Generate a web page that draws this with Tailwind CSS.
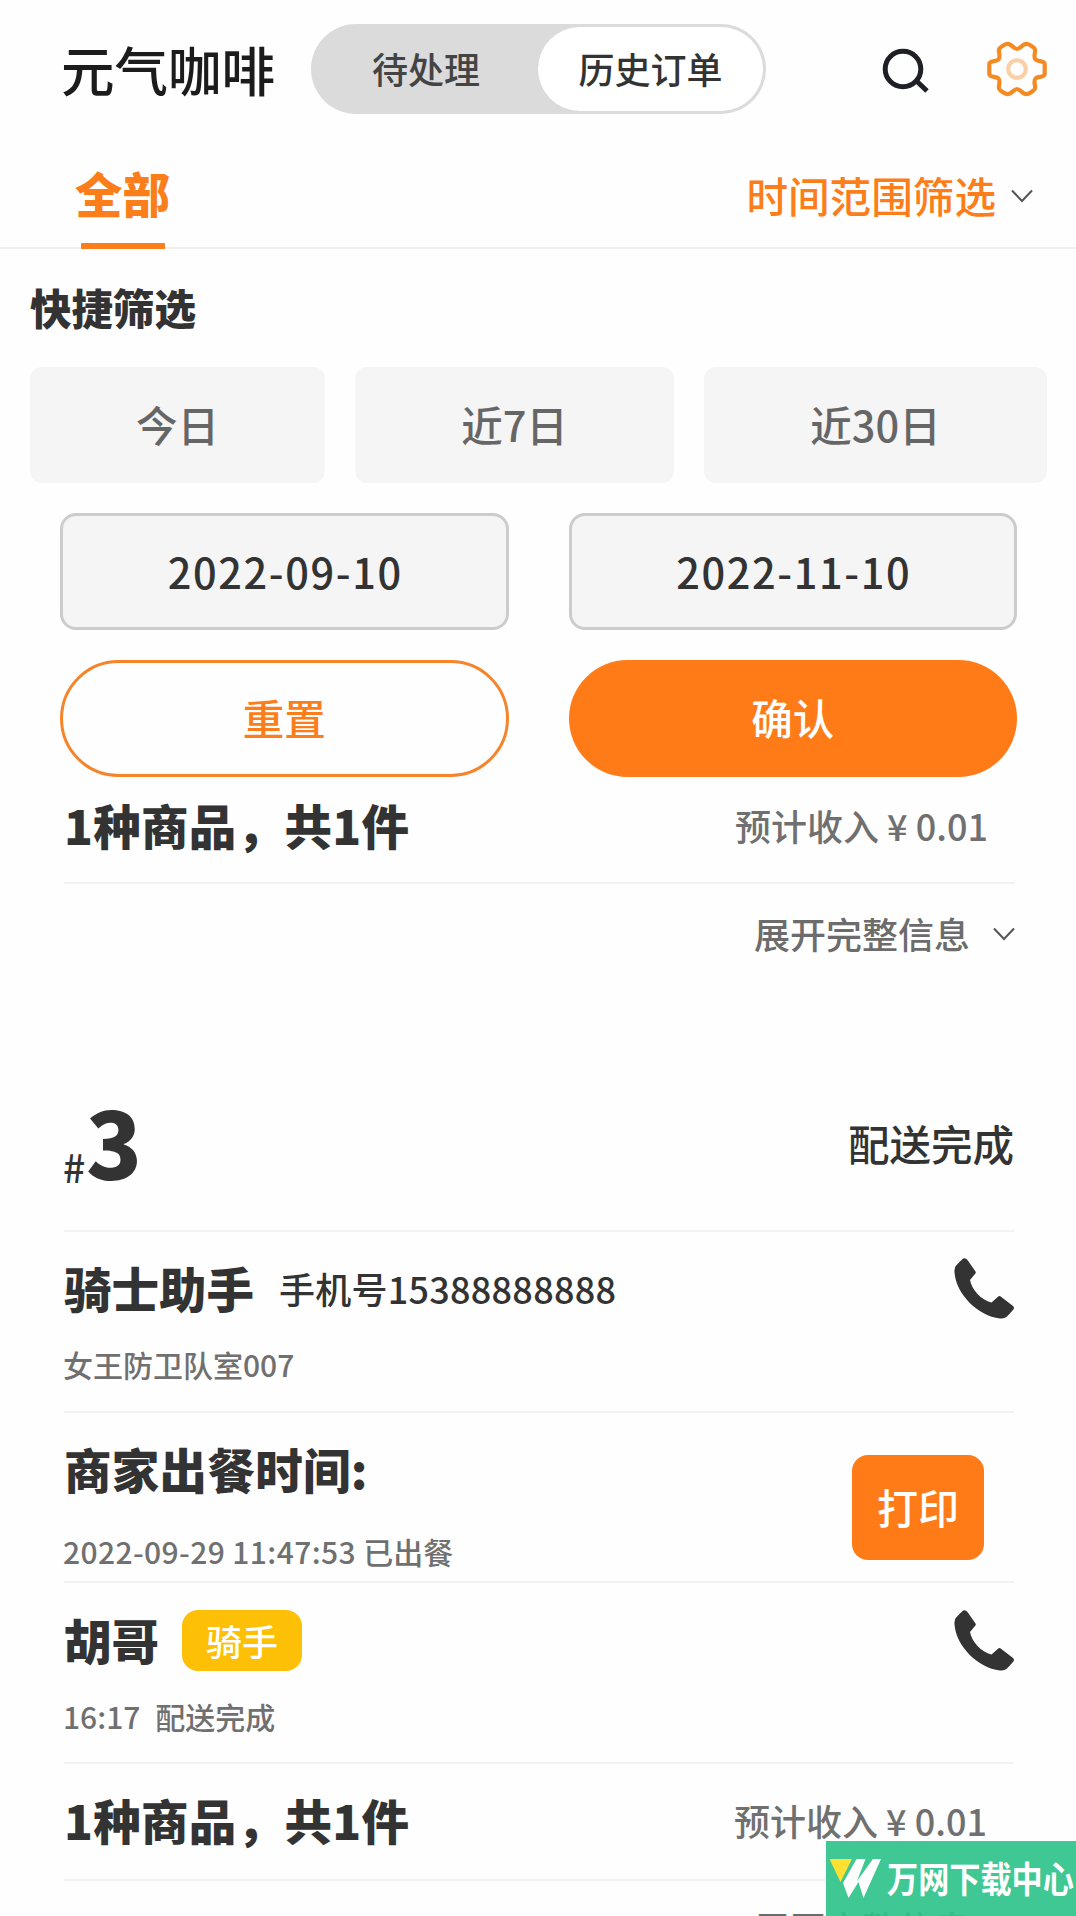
<!DOCTYPE html>
<html lang="zh-CN">
<head>
<meta charset="utf-8">
<title>元气咖啡</title>
<script src="https://cdn.jsdelivr.net/npm/@tailwindcss/browser@4"></script>
</head>
<body class="relative h-[1916px] w-[1076px] overflow-hidden bg-[#fefefe] font-['Noto_Sans_CJK_SC',sans-serif] leading-none text-[#333] whitespace-nowrap">

<svg class="hidden">
  <symbol id="phone" viewBox="0 0 60 61"><path fill="#333" d="M8 1.500Q11-1 13.500 2L21.500 13.500Q22.300 15 21 16L16 22C18 32 27 42 37.500 44.500L44 38.700Q45.500 37.500 47 38.700L59 48Q61 50 59 52L53 58.500Q50.500 61 46 60.500C24 58 2 36 .5 14.500Q0 9 2.500 7Z"/></symbol>
  <symbol id="chevron" viewBox="0 0 22 14"><path fill="none" stroke="#555" stroke-width="2" d="M1 1.500L11 12L21 1.500"/></symbol>
</svg>

<header class="flex h-[138px] pl-[61px] pr-[29px]">
  <h1 class="mt-[42px] w-[250px] text-[53.500px] font-medium text-[#1c1c1c]">元气咖啡</h1>
  <div class="mt-6 flex h-[90px] w-[455px] rounded-full bg-[#dbdbdb] p-[3px] text-[36px] font-medium">
    <div class="flex w-[224px] items-center justify-center pb-[3px] text-[#444]">待处理</div>
    <div class="flex w-[225px] items-center justify-center rounded-full bg-white pb-[3px]">历史订单</div>
  </div>
  <svg class="ml-[115px] mt-[46px] h-12 w-12" viewBox="0 0 48 48" fill="none" stroke="#1f2026" stroke-width="5"><circle cx="22" cy="23" r="17.800"/><path d="M34.500 34L46 45"/></svg>
  <svg class="ml-auto mt-[40px] h-[58px] w-[60px]" viewBox="-30 -29 60 58" fill="none">
    <path stroke="#f58a22" stroke-width="4.200" stroke-linejoin="round" d="M0-20C3-20 6-25.500 9.500-25.200C12-24.800 17.500-21.500 18-19.500C18.700-16 16-12.500 18.500-9.500C21-7 27.500-9 27.700-5V5C27.500 9 21 7 18.500 9.500C16 12.500 18.700 16 18 19.500C17.500 21.500 12 24.800 9.500 25.200C6 25.500 3 20 0 20C-3 20-6 25.500-9.500 25.200C-12 24.800-17.500 21.500-18 19.500C-18.700 16-16 12.500-18.500 9.500C-21 7-27.500 9-27.700 5V-5C-27.500-9-21-7-18.500-9.500C-16-12.500-18.700-16-18-19.500C-17.500-21.500-12-24.800-9.500-25.200C-6-25.500-3-20 0-20Z"/>
    <circle r="8.800" stroke="#fbcfa6" stroke-width="4"/>
  </svg>
</header>

<nav class="relative flex h-[111px] justify-between border-b-2 border-[#f0f0f0] pl-[75px] pr-[43px] text-[#fb7e1a]">
  <div class="pt-[31px] text-[47.500px] font-black">全部</div>
  <div class="flex pt-[37px] text-[41.600px] font-medium">时间范围筛选<svg class="ml-[15px] mt-[14px] h-[14px] w-[22px]"><use href="#chevron"/></svg></div>
  <div class="absolute bottom-[-2px] left-[81px] h-[6px] w-[84px] rounded-[1px] bg-[#fb7e1a]"></div>
</nav>

<section class="h-[529px] pl-[30px] pr-[29px] pt-[38px]">
  <h2 class="text-[41.500px] font-black">快捷筛选</h2>
  <div class="mt-[38px] flex gap-[30px] text-[41.500px] font-medium text-[#666]">
    <div class="flex h-[116px] w-[295px] items-center justify-center rounded-xl bg-[#f5f5f5]">今日</div>
    <div class="flex h-[116px] w-[319px] items-center justify-center rounded-xl bg-[#f5f5f5]">近7日</div>
    <div class="flex h-[116px] w-[343px] items-center justify-center rounded-xl bg-[#f5f5f5]">近30日</div>
  </div>
  <div class="mt-[30px] grid grid-cols-2 gap-x-[60px] gap-y-[30px] px-[30px] text-[41.500px] font-medium">
    <div class="flex h-[117px] items-center justify-center rounded-2xl border-[3px] border-[#ccc] bg-[#f5f5f5] pl-[2px] pt-0.5 tracking-[1.600px]">2022-09-10</div>
    <div class="flex h-[117px] items-center justify-center rounded-2xl border-[3px] border-[#ccc] bg-[#f5f5f5] pl-[2px] pt-0.5 tracking-[1.600px]">2022-11-10</div>
    <div class="flex h-[117px] items-center justify-center rounded-full border-[3px] border-[#f5842a] text-[#fb7e1a]">重置</div>
    <div class="flex h-[117px] items-center justify-center rounded-full bg-[#ff7b17] text-white">确认</div>
  </div>
</section>

<section class="ml-16 mr-[61px]">
  <div class="flex h-[106px] items-center justify-between border-b-2 border-[#f2f2f2] pb-[10px] pr-[27px]">
    <h3 class="text-[47.500px] font-black tracking-[0.300px]">1种商品，共1件</h3>
    <div class="text-[36px] font-medium text-[#707070]">预计收入 ¥ 0.01</div>
  </div>
  <div class="flex h-[181px] justify-end pt-[31px] text-[36px] font-medium text-[#6c6c6c]">展开完整信息<svg class="ml-[23px] mt-[12px] h-[14px] w-[22px]"><use href="#chevron"/></svg></div>
</section>

<section class="ml-16 mr-[62px]">
  <div class="flex h-[167px] justify-between border-b-2 border-[#f2f2f2]">
    <div class="flex items-baseline pt-[29px]"><span class="-ml-px w-[23px] translate-y-[3px] text-[39px] font-medium">#</span><span class="text-[92px] font-black">3</span></div>
    <div class="pt-[58px] text-[41.500px] font-medium">配送完成</div>
  </div>
  <div class="h-[181px] border-b-2 border-[#f2f2f2] pt-[25px]">
    <div class="flex h-[62px] items-center"><span class="text-[47.500px] font-black">骑士助手</span><span class="ml-[25px] text-[36px] font-medium tracking-[0.250px]">手机号15388888888</span><svg class="ml-auto h-[61px] w-[60px]"><use href="#phone"/></svg></div>
    <div class="-ml-px mt-[30px] text-[30px] font-medium text-[#707070]">女王防卫队室007</div>
  </div>
  <div class="flex h-[170px] justify-between border-b-2 border-[#f2f2f2] pr-[30px]">
    <div>
      <div class="pt-[32px] text-[47.500px] font-black tracking-[0.300px]">商家出餐时间:</div>
      <div class="-ml-px mt-[43px] text-[30px] font-medium text-[#707070]"><span class="tracking-[0.400px]">2022-09-29 11:47:53 </span>已出餐</div>
    </div>
    <div class="mt-[42px] flex h-[105px] w-[132px] items-center justify-center rounded-2xl bg-[#ff7b17] pb-[3px] text-[41px] font-medium text-white">打印</div>
  </div>
  <div class="h-[181px] border-b-2 border-[#f2f2f2] pt-[26px]">
    <div class="flex h-[62px] items-center"><span class="text-[47.500px] font-black">胡哥</span><span class="ml-[23px] flex h-[61px] w-[120px] items-center justify-center rounded-2xl bg-[#fec006] text-[36px] font-medium text-white">骑手</span><svg class="ml-auto h-[61px] w-[60px]"><use href="#phone"/></svg></div>
    <div class="-ml-px mt-[30px] flex gap-[15px] text-[30px] font-medium text-[#707070]"><span>16:17</span><span>配送完成</span></div>
  </div>
  <div class="flex h-[117px] items-center justify-between border-b-2 border-[#f2f2f2] pb-[3px] pr-[27px]">
    <h3 class="text-[47.500px] font-black tracking-[0.300px]">1种商品，共1件</h3>
    <div class="text-[36px] font-medium text-[#707070]">预计收入 ¥ 0.01</div>
  </div>
  <div class="flex h-[36px] justify-end pr-[44px] pt-[28px] text-[36px] font-medium text-[#6c6c6c]">展开完整信息</div>
</section>

<div class="absolute bottom-0 right-0 flex h-[75px] w-[250px] bg-[#2fc38b]/92">
  <svg class="ml-[3px] mt-[17px] h-[42px] w-[54px] shrink-0" viewBox="0 0 54 42"><path fill="#fff" d="M27.500 1H36.500L28 23L44 1H52L34.500 40L29.500 24L19.500 40L14 25Z"/><path fill="#ffe033" d="M.5 1H23L11.500 24Z"/></svg>
  <div class="ml-[4px] mt-[18px] w-[216px] shrink-0 origin-left scale-x-[0.865] text-[36px] font-bold text-white">万网下载中心</div>
</div>
</body>
</html>
